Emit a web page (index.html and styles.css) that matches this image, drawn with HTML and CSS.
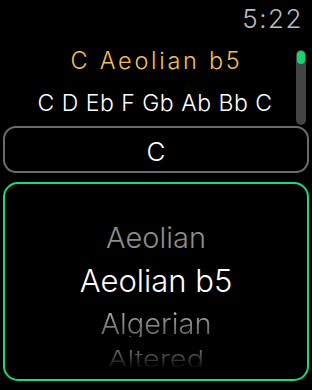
FILE: index.html
```html
<!DOCTYPE html>
<html>
<head>
<meta charset="utf-8">
<link rel="stylesheet" href="styles.css">
</head>
<body>
<div class="watch">
  <div class="status"><span class="time">5:22</span></div>
  <div class="header">
    <div class="title">C Aeolian b5</div>
    <div class="notes">C D Eb F Gb Ab Bb C</div>
  </div>
  <div class="scrollbar"><div class="thumb"></div></div>
  <div class="key-box">C</div>
  <div class="picker">
    <div class="item item-prev">Aeolian</div>
    <div class="item item-current">Aeolian b5</div>
    <div class="item item-next">Algerian</div>
    <div class="item item-far">Altered</div>
  </div>
</div>
</body>
</html>
```
FILE: styles.css
```css
html, body {
  margin: 0;
  padding: 0;
  background: #000;
}
.watch {
  position: relative;
  width: 312px;
  height: 390px;
  background: #000;
  font-family: Inter, Roboto, "Noto Sans", sans-serif;
  font-weight: 300;
  display: flex;
  flex-direction: column;
  overflow: hidden;
}
.status {
  display: flex;
  justify-content: flex-end;
  padding: 3px 9px 0 0;
  height: 32px;
  flex-shrink: 0;
}
.time {
  font-size: 26px;
  line-height: 32px;
  color: #b9bcc5;
  letter-spacing: 1.5px;
}
.header {
  display: flex;
  flex-direction: column;
  align-items: center;
  padding-right: 2px;
  flex-shrink: 0;
}
.title {
  margin-top: 12px;
  font-size: 23.5px;
  line-height: 28px;
  color: #f4bf5a;
  letter-spacing: 2.7px;
  padding-left: 3px;
}
.notes {
  margin-top: 14px;
  font-size: 23px;
  line-height: 28px;
  color: #fff;
  letter-spacing: 0.5px;
}
.scrollbar {
  position: absolute;
  left: 296px;
  top: 50px;
  width: 10px;
  height: 75px;
  border-radius: 5px;
  background: #444;
}
.thumb {
  margin: 1px;
  height: 13px;
  border-radius: 4px;
  background: #18d46e;
}
.key-box {
  flex-shrink: 0;
  box-sizing: border-box;
  margin: 9px 3px 0 3px;
  height: 47px;
  padding-top: 4px;
  border: 2px solid #6b6b6b;
  border-radius: 13px;
  display: flex;
  align-items: center;
  justify-content: center;
  color: #fff;
  font-size: 26px;
}
.picker {
  flex-shrink: 0;
  box-sizing: border-box;
  margin: 9px 3px 0 3px;
  height: 199px;
  border: 2px solid #1fd87b;
  border-radius: 15px;
  display: flex;
  flex-direction: column;
  align-items: center;
  padding-top: 34px;
  overflow: hidden;
}
.item {
  line-height: 40px;
  flex-shrink: 0;
}
.item-prev {
  font-size: 29px;
  color: #8c8c8c;
  height: 43px;
}
.item-current {
  font-size: 31px;
  color: #fff;
  height: 43px;
}
.item-next {
  font-size: 29px;
  color: transparent;
  background: linear-gradient(#b0b0b0 20%, #6e6e6e 80%);
  -webkit-background-clip: text;
  background-clip: text;
  height: 33px;
}
.item-far {
  font-size: 29px;
  height: 40px;
  color: transparent;
  background: linear-gradient(#666 25%, #000 82%);
  -webkit-background-clip: text;
  background-clip: text;
  transform: scaleY(0.8);
  transform-origin: 50% 30px;
}
```
